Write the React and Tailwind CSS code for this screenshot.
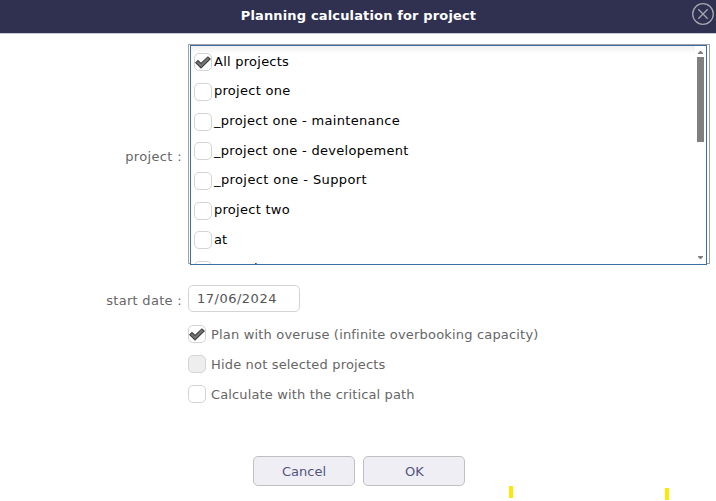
const projects = [
  { name: 'All projects', checked: true, row: 'h-[30px]', text: 'leading-[17px] tracking-[0.25px]' },
  { name: 'project one', row: 'h-[30px]', text: 'leading-[15px] tracking-[0.27px]' },
  { name: '_project one - maintenance', row: 'h-[29px]', text: 'leading-[15px] tracking-[0.31px]' },
  { name: '_project one - developement', row: 'h-[30px]', text: 'leading-[17px] tracking-[0.3px]' },
  { name: '_project one - Support', row: 'h-[30px]', text: 'leading-[15px] tracking-[0.4px]' },
  { name: 'project two', row: 'h-[29px]', text: 'leading-[15px] tracking-[0.27px]' },
  { name: 'at', row: 'h-[30px]', text: 'leading-[17px]' },
  { name: 'at project', row: 'h-[30px]', text: 'leading-[15px] tracking-[0.27px]' },
];

function Check({ checked, disabled }) {
  return (
    <span
      className={`block h-[18px] w-[18px] shrink-0 rounded-[5px] border border-[#d4d4d4] ${
        disabled ? 'bg-[#eeeeee]' : 'bg-white'
      }`}
    >
      {checked && (
        <svg className="block h-4 w-4" viewBox="0 0 16 16">
          <path
            d="M0.8 8.7 L3 6.5 L6 9.5 L12.9 2.9 L15.2 5 L6 13.9 Z"
            fill="#777777"
            stroke="#414141"
            strokeWidth="1.1"
          />
        </svg>
      )}
    </span>
  );
}

function Option({ label, checked, disabled, tracking }) {
  return (
    <div className="flex h-[30px] items-start gap-[5px]">
      <Check checked={checked} disabled={disabled} />
      <span className={`leading-[20px] ${tracking}`}>{label}</span>
    </div>
  );
}

export default function App() {
  return (
    <div className="relative h-[501px] w-[716px] overflow-hidden bg-white font-['DejaVu_Sans',sans-serif] text-[13px] whitespace-nowrap text-[#666666]">
      <header className="flex h-[34px] items-center border-b border-[#c8c8d4] bg-[#303050] pr-[2px] pl-[24px]">
        <h1 className="flex-1 pb-[2px] pl-[1px] text-center font-bold tracking-[0.15px] text-white">
          Planning calculation for project
        </h1>
        <svg className="mb-[5px] h-[22px] w-[22px]" viewBox="0 0 22 22" fill="none" stroke="#a4a5ae" strokeWidth="1.3">
          <circle cx="11" cy="11" r="10.3" />
          <path d="M6.3 6.3 L15.7 15.7 M15.7 6.3 L6.3 15.7" />
        </svg>
      </header>

      <div className="flex pt-[10px]">
        <div className="w-[188px] pt-[103px] pr-[6px] text-right tracking-[0.35px]">project :</div>
        <div className="h-[220px] w-[522px] border border-[#a0a0a8] pl-[1px]">
          <div className="flex h-[220px] w-[517px] overflow-hidden border border-[#3b6ea5] bg-white text-black">
            <div className="flex-1 bg-linear-to-b from-[#f0f0f0] to-white to-[8px] pt-[7px] pl-[3px]">
              {projects.map((p) => (
                <div key={p.name} className={`flex items-start gap-[2px] ${p.row}`}>
                  <Check checked={p.checked} />
                  <span className={p.text}>{p.name}</span>
                </div>
              ))}
            </div>
            <div className="flex w-[11px] flex-col items-center bg-white">
              <svg className="mt-[5px] h-[3px] w-[5px] shrink-0" viewBox="0 0 5 3">
                <path d="M0 3 V2 L2 0 H3 L5 2 V3 Z" fill="#808080" />
              </svg>
              <div className="mt-[3px] h-[85px] w-[7px] shrink-0 bg-[#808080]" />
              <svg className="mt-[114px] h-[3px] w-[5px] shrink-0" viewBox="0 0 5 3">
                <path d="M0 0 V1 L2 3 H3 L5 1 V0 Z" fill="#808080" />
              </svg>
            </div>
          </div>
        </div>
      </div>

      <div className="mt-[21px] flex">
        <div className="w-[188px] pt-[6px] pr-[6px] text-right tracking-[0.3px]">start date :</div>
        <div className="h-[27px] w-[112px] rounded-[5px] border border-[#d4d4d4] pl-[8px] leading-[25px] tracking-[0.5px] text-[#555555]">
          17/06/2024
        </div>
      </div>

      <div className="mt-[13px] pl-[188px]">
        <Option label="Plan with overuse (infinite overbooking capacity)" tracking="tracking-[0.18px]" checked />
        <Option label="Hide not selected projects" tracking="tracking-[0.17px]" disabled />
        <Option label="Calculate with the critical path" tracking="tracking-[0.14px]" />
      </div>

      <div className="mt-[41px] flex gap-2 pl-[253px] text-[#545381]">
        <button className="h-[30px] w-[102px] rounded-[5px] border border-[#c0c0c0] bg-[#efeef5] pt-[2px]">Cancel</button>
        <button className="h-[30px] w-[102px] rounded-[5px] border border-[#c0c0c0] bg-[#efeef5] pt-[2px] pl-[1px]">OK</button>
      </div>

      <div className="absolute top-[486px] left-[509px] h-3 w-1 bg-[#ffe900]" />
      <div className="absolute top-[488px] left-[665px] h-3 w-1 bg-[#ffe900]" />
    </div>
  );
}
